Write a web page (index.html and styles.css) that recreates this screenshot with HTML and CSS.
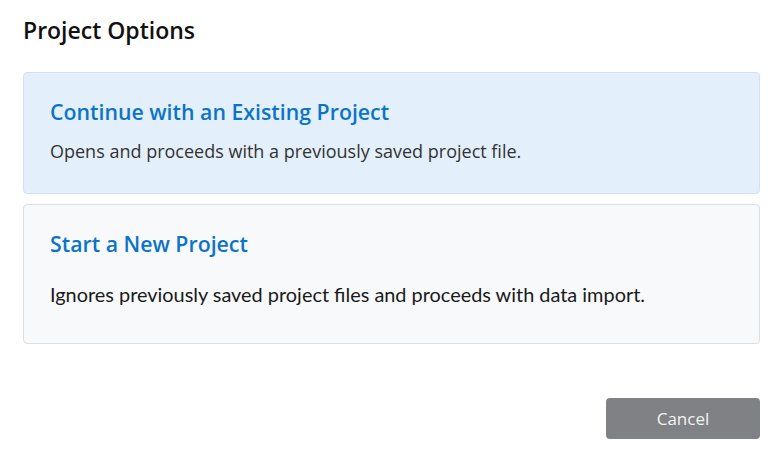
FILE: index.html
```html
<!DOCTYPE html>
<html>
<head>
<meta charset="utf-8">
<link rel="stylesheet" href="styles.css">
</head>
<body>
<div class="dialog">
  <h1 class="title">Project Options</h1>
  <div class="options">
    <div class="option option-selected">
      <div class="option-title">Continue with an Existing Project</div>
      <div class="option-desc">Opens and proceeds with a previously saved project file.</div>
    </div>
    <div class="option option-plain">
      <div class="option-title">Start a New Project</div>
      <div class="option-desc option-desc-alt">Ignores previously saved project files and proceeds with data import.</div>
    </div>
  </div>
  <div class="footer">
    <button class="btn-cancel">Cancel</button>
  </div>
</div>
</body>
</html>
```
FILE: styles.css
```css
html, body {
  margin: 0;
  padding: 0;
  background: #ffffff;
}
.dialog {
  width: 784px;
  height: 454px;
  box-sizing: border-box;
  padding: 15px 24px 0 23px;
  font-family: "Open Sans", "Noto Sans", sans-serif;
  display: flex;
  flex-direction: column;
}
.title {
  margin: 0;
  font-size: 23px;
  line-height: 30px;
  font-weight: 600;
  color: #111111;
}
.options {
  margin-top: 27px;
  display: flex;
  flex-direction: column;
  gap: 10px;
}
.option {
  border-radius: 4px;
  padding: 25px 26px 30px 26px;
}
.option-selected {
  background: #e3f0fb;
  border: 1px solid #d5e2ee;
}
.option-plain {
  background: #f7f9fb;
  border: 1px solid #dcdfe2;
  padding-bottom: 36px;
}
.option-title {
  font-size: 21.3px;
  line-height: 28px;
  font-weight: 600;
  color: #0c74c8;
}
.option-desc {
  margin-top: 13px;
  font-size: 18px;
  line-height: 24px;
  color: #333333;
}
.option-desc-alt {
  margin-top: 23px;
  font-family: "Lato", "Noto Sans", sans-serif;
  font-size: 19.9px;
  line-height: 26px;
  color: #1a1a1a;
}
.footer {
  margin-top: 54px;
  display: flex;
  justify-content: flex-end;
}
.btn-cancel {
  width: 154px;
  height: 41px;
  border: none;
  border-radius: 4px;
  background: #808184;
  color: #f2f2f2;
  font-family: "Open Sans", "Noto Sans", sans-serif;
  font-size: 17px;
}
```
